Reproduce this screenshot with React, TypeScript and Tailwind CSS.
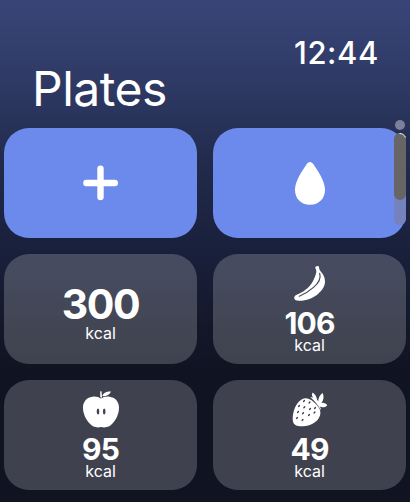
import type { ReactNode } from "react";

const seeds = [
  [13, 11], [18.5, 12.5], [8, 16], [13.3, 17.3], [19, 19], [24, 18],
  [7, 22], [12, 23.2], [18, 25], [23.5, 22.5], [6, 28], [11.5, 30],
];

const PlusIcon = () => (
  <svg width="35" height="36" viewBox="0 0 35 36" fill="none">
    <path
      d="M17.5 3.7v28.4M3.4 18h28.4"
      stroke="white"
      strokeWidth="6.4"
      strokeLinecap="round"
    />
  </svg>
);

const DropIcon = () => (
  <svg width="30" height="43" viewBox="0 0 30 43" fill="white">
    <path d="M15 0C16.5 0 17.5.9 18.6 2.5 22.5 8.3 30 19.2 30 27.7 30 36.6 24 42.7 15 42.7S0 36.6 0 27.7C0 19.2 7.5 8.3 11.4 2.5 12.5.9 13.5 0 15 0Z" />
  </svg>
);

const BananaIcon = () => (
  <svg width="36" height="38" viewBox="0 0 36 38" fill="none">
    <path
      d="M23.1 3.2Q24.8 1.7 26.7 2.2L27.7 6.3C30 9 33 12.2 33 17.3 33 22.5 30 26.5 26 30 21 34.4 13.5 37 7 36.8 3.8 36.7 2 35.8 2.2 33.6 2.4 31.5 4.5 31 7 29.8 13.5 26.8 19 22 21.8 15.3 23.2 12 24.7 9 24.3 6.5Z"
      fill="white"
    />
    <path
      d="M27.7 9.3C29.3 14.7 26.2 19.3 21.5 23.4 16.8 27.5 12.3 30.3 7.3 32.2"
      stroke="#464959"
      strokeWidth="1.2"
      strokeLinecap="round"
    />
  </svg>
);

const AppleIcon = () => (
  <svg width="40" height="38" viewBox="0 0 40 38" fill="white">
    <path d="M20 8.6C17.8 7.1 14.7 6.3 11.5 6.7 6 7.4 2 11.4 2 17.5 2 24 5 29.5 8.7 33.6 11.7 37 15.8 38.2 20 37 24.2 38.2 28.5 37 31.5 33.6 35.2 29.5 38 24 38 17.5 38 11.4 34 7.4 28.5 6.7 25.3 6.3 22.2 7.1 20 8.6Z" />
    <path d="M19.2 1.3H20.5L21 6.8 20.2 8.2 19.2 6.5ZM21.3 6.1C22 3.2 25.2 1.2 30 1.4 28.7 4.8 25.2 6.5 21.3 6.1Z" />
    <ellipse cx="17" cy="21.6" rx="1.3" ry="3" fill="#414450" />
    <ellipse cx="23.2" cy="21.6" rx="1.3" ry="3" fill="#414450" />
  </svg>
);

const StrawberryIcon = () => (
  <svg width="38" height="38" viewBox="0 0 38 38" fill="white">
    <path d="M11 9.2C14.5 7.3 18.7 8.5 22.7 12 27.3 16 30 19.5 29.3 24.2 28.4 30 22.5 34.7 14.5 36 8 37 3 36 2 31.5 1 26.5 2.8 13.7 11 9.2Z" />
    <path d="M19.3 7.2C21.2 7 22 7.4 22.6 8 20.4 5.8 20.6 4.2 21.7 2.5 24.2 4.3 25.6 6.5 25.9 9.3L27.2 11.4C27.2 8 29 4.7 31.7 3 33.2 6.7 32.7 10 30.4 12.9 32.3 12.5 34.5 13.2 36.3 15.2 34 17.7 31.2 17.8 28.6 16.6 29.8 17.8 29.9 19 30 20.2 27.2 15.5 24.2 11 19.3 7.2Z" />
    {seeds.map(([x, y]) => (
      <ellipse
        key={`${x}-${y}`}
        cx={x}
        cy={y}
        rx="0.8"
        ry="1.4"
        fill="#414450"
        transform={`rotate(38 ${x} ${y})`}
      />
    ))}
  </svg>
);

const ActionCard = ({ label, children }: { label: string; children: ReactNode }) => (
  <button
    aria-label={label}
    className="flex h-[110px] items-center justify-center rounded-[25px] bg-[#6c8aec]"
  >
    {children}
  </button>
);

const FoodCard = ({ kcal, icon }: { kcal: number; icon?: ReactNode }) => (
  <button className="flex h-[110px] flex-col items-center rounded-[25px] bg-white/20">
    {icon ? (
      <>
        <span className="mt-[10px] h-[38px]">{icon}</span>
        <span className="mt-[10px] text-[30px] leading-[22px] font-bold tracking-[-0.9px]">
          {kcal}
        </span>
        <span className="mt-[4px] text-[16px] leading-[14px]">kcal</span>
      </>
    ) : (
      <>
        <span className="mt-[35px] text-[41px] leading-[30px] font-bold tracking-[-1.5px]">
          {kcal}
        </span>
        <span className="mt-[7px] text-[16px] leading-[14px]">kcal</span>
      </>
    )}
  </button>
);

export default function App() {
  return (
    <div className="relative h-[502px] w-[410px] overflow-hidden bg-[linear-gradient(180deg,#394578_0%,#2b365f_21%,#222b4c_32%,#1a213e_48%,#131829_65%,#101322_74%,#101322_100%)] font-['Inter',sans-serif] text-white">
      <header className="flex h-[128px] flex-col">
        <time className="mt-[33px] mr-[31px] self-end text-[31px] leading-[40px] font-medium tracking-[0.6px]">
          12:44
        </time>
        <h1 className="-mt-[14px] ml-[32px] text-[48px] leading-[60px] font-normal tracking-[-0.5px]">
          Plates
        </h1>
      </header>

      <main className="grid grid-cols-2 gap-4 px-1">
        <ActionCard label="Add plate">
          <PlusIcon />
        </ActionCard>
        <ActionCard label="Add water">
          <DropIcon />
        </ActionCard>
        <FoodCard kcal={300} />
        <FoodCard kcal={106} icon={<BananaIcon />} />
        <FoodCard kcal={95} icon={<AppleIcon />} />
        <FoodCard kcal={49} icon={<StrawberryIcon />} />
      </main>

      {/* scroll indicator */}
      <div className="absolute top-[119.5px] right-[4px] flex w-3 flex-col items-center">
        <div className="size-[10px] rounded-full bg-[#7b819b]" />
        <div className="mt-[3.5px] h-[92px] w-3 rounded-full bg-[#7582bd]">
          <div className="relative h-[67px] rounded-full bg-[#666666]">
            <svg className="absolute top-0 right-0" width="12" height="8" fill="none">
              <path
                d="M5.5.5C8.8.5 11 2.5 11.5 5"
                stroke="white"
                strokeWidth="1"
                strokeDasharray="2 .6"
              />
            </svg>
          </div>
        </div>
      </div>
    </div>
  );
}
